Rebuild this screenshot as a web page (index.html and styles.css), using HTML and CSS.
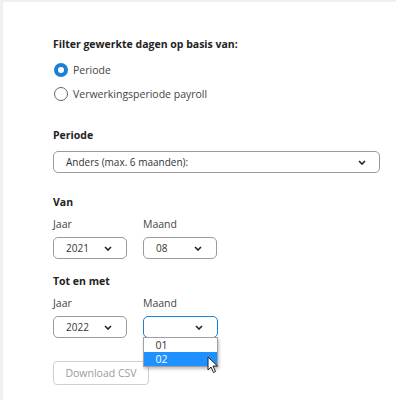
FILE: index.html
```html
<!DOCTYPE html>
<html lang="nl">

<head>
    <meta charset="UTF-8">
    <meta name="viewport" content="width=device-width, initial-scale=1.0">
    <title>Gewerkte dagen</title>
    <link rel="stylesheet" href="styles.css">
</head>

<body>
    <div class="panel">
        <div class="heading">Filter gewerkte dagen op basis van:</div>

        <div class="radio-group">
            <div class="radio-row">
                <span class="radio checked"></span>
                <span>Periode</span>
            </div>
            <div class="radio-row">
                <span class="radio"></span>
                <span>Verwerkingsperiode payroll</span>
            </div>
        </div>

        <div class="heading section">Periode</div>
        <div class="select wide">
            <span>Anders (max. 6 maanden):</span>
            <svg class="chevron" width="8" height="5" viewBox="0 0 8 5"><path d="M1 1 L4 4 L7 1" fill="none" stroke="#222" stroke-width="1.6"/></svg>
        </div>

        <div class="heading section">Van</div>
        <div class="fields">
            <div class="field">
                <div class="label">Jaar</div>
                <div class="select">
                    <span>2021</span>
                    <svg class="chevron" width="8" height="5" viewBox="0 0 8 5"><path d="M1 1 L4 4 L7 1" fill="none" stroke="#222" stroke-width="1.6"/></svg>
                </div>
            </div>
            <div class="field">
                <div class="label">Maand</div>
                <div class="select">
                    <span>08</span>
                    <svg class="chevron" width="8" height="5" viewBox="0 0 8 5"><path d="M1 1 L4 4 L7 1" fill="none" stroke="#222" stroke-width="1.6"/></svg>
                </div>
            </div>
        </div>

        <div class="heading section-tight">Tot en met</div>
        <div class="fields">
            <div class="field">
                <div class="label">Jaar</div>
                <div class="select">
                    <span>2022</span>
                    <svg class="chevron" width="8" height="5" viewBox="0 0 8 5"><path d="M1 1 L4 4 L7 1" fill="none" stroke="#222" stroke-width="1.6"/></svg>
                </div>
            </div>
            <div class="field">
                <div class="label">Maand</div>
                <div class="select focused">
                    <span></span>
                    <svg class="chevron" width="8" height="5" viewBox="0 0 8 5"><path d="M1 1 L4 4 L7 1" fill="none" stroke="#222" stroke-width="1.6"/></svg>
                    <div class="dropdown">
                        <div class="option">01</div>
                        <div class="option active">02</div>
                    </div>
                    <svg class="cursor" width="12" height="18" viewBox="0 0 12 18"><path d="M1 1 L1 14 L4 11 L6.5 16.5 L8.5 15.5 L6 10 L10.5 10 Z" fill="#fff" stroke="#222" stroke-width="1"/></svg>
                </div>
            </div>
        </div>

        <button class="btn" disabled>Download CSV</button>
    </div>
</body>

</html>
```

FILE: styles.css
```css
body {
    margin: 0;
    padding: 0;
    background: #f0f0f0;
    font-family: 'Open Sans', 'Noto Sans', sans-serif;
    font-size: 10px;
    color: #444;
}

.panel {
    margin: 2px 0 0 3px;
    background: #ffffff;
    height: 398px;
    box-sizing: border-box;
    padding: 34px 0 0 50px;
}

.heading {
    font-weight: bold;
    font-size: 10.5px;
    color: #222;
    line-height: 16px;
}

.section {
    margin-top: 21px;
}

.section-tight {
    margin-top: 14px;
}

.radio-group {
    margin-top: 6px;
}

.radio-row {
    display: flex;
    align-items: center;
    gap: 5px;
    height: 24px;
    font-size: 10.5px;
}

.radio {
    width: 14px;
    height: 14px;
    border: 1px solid #666;
    border-radius: 50%;
    box-sizing: border-box;
    margin-left: 1px;
}

.radio.checked {
    border: 4.5px solid #1c7fd6;
    background: #ffffff;
}

.select {
    position: relative;
    display: flex;
    align-items: center;
    justify-content: space-between;
    height: 22px;
    box-sizing: border-box;
    border: 1px solid #9a9a9a;
    border-radius: 5px;
    padding: 0 14px 0 12px;
    color: #333;
    margin-top: 8px;
    width: 74px;
}

.select.wide {
    width: 327px;
    padding-right: 13px;
}

.select.focused {
    border: 1.5px solid #1c7fd6;
    width: 75px;
}

.chevron {
    display: block;
}

.fields {
    display: flex;
    gap: 16px;
    margin-top: 6px;
}

.field .label {
    line-height: 16px;
    font-size: 10.5px;
}

.field .select {
    margin-top: 5px;
}

.dropdown {
    position: absolute;
    top: 19.5px;
    left: -1.5px;
    width: 75px;
    background: #ffffff;
    border: 1px solid #a0a0a0;
    box-shadow: 1px 2px 3px rgba(0, 0, 0, 0.25);
    box-sizing: border-box;
    z-index: 10;
}

.option {
    height: 14px;
    line-height: 14px;
    padding-left: 12px;
    color: #333;
    font-size: 10.5px;
}

.option.active {
    background: #1e90ff;
    color: #ffffff;
}

.cursor {
    position: absolute;
    left: 63px;
    top: 39px;
    z-index: 20;
}

.btn {
    display: block;
    margin-top: 23px;
    width: 96px;
    height: 24px;
    background: #ffffff;
    border: 1px solid #cfcfcf;
    border-radius: 4px;
    color: #9a9a9a;
    font-family: 'Open Sans', 'Noto Sans', sans-serif;
    font-size: 10.5px;
    padding: 0;
}
```
